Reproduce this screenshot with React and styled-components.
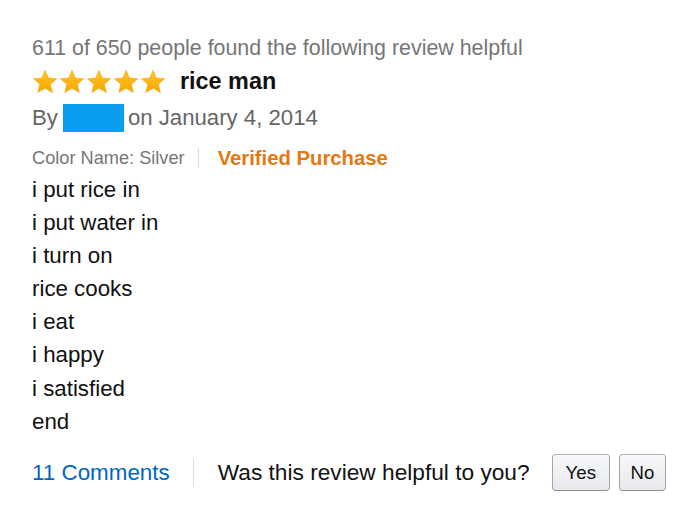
import React from "react";
import styled, { createGlobalStyle } from "styled-components";

const GlobalStyle = createGlobalStyle`
  html, body {
    margin: 0;
    padding: 0;
    background: #fff;
  }
  body {
    font-family: "Liberation Sans", Arial, sans-serif;
    color: #111;
  }
`;

const Review = styled.div`
  width: 700px;
  height: 522px;
  box-sizing: border-box;
  padding: 36px 0 0 32px;
`;

const Helpful = styled.div`
  font-size: 21.4px;
  line-height: 24px;
  color: #767676;
  white-space: nowrap;
`;

const TitleRow = styled.div`
  display: flex;
  align-items: center;
  gap: 14px;
  height: 29px;
  margin-top: 7px;
`;

const Stars = styled.div`
  display: flex;
  gap: 1px;
`;

const Title = styled.span`
  font-size: 23.4px;
  font-weight: bold;
  color: #111;
`;

const ByLine = styled.div`
  display: flex;
  align-items: center;
  height: 30px;
  font-size: 22.2px;
  color: #666;
  margin-top: 7px;
  white-space: nowrap;
`;

const Redacted = styled.span`
  display: inline-block;
  width: 61px;
  height: 28px;
  background: #0a9df0;
  margin: 0 4px 0 5px;
`;

const Meta = styled.div`
  display: flex;
  align-items: center;
  height: 30px;
  margin-top: 10px;
  white-space: nowrap;
`;

const Color = styled.span`
  font-size: 18.2px;
  color: #767676;
`;

const Divider = styled.span`
  display: inline-block;
  width: 1px;
  height: ${(p) => p.h || 20}px;
  background: #ddd;
  margin: 0 ${(p) => p.r || 19}px 0 ${(p) => p.l || 13}px;
`;

const Verified = styled.span`
  font-size: 20.3px;
  font-weight: bold;
  color: #e47911;
`;

const Body = styled.div`
  font-size: 22.3px;
  line-height: 33.1px;
  color: #111;
`;

const Footer = styled.div`
  display: flex;
  align-items: center;
  margin-top: 16px;
  height: 38px;
  white-space: nowrap;
`;

const Comments = styled.a`
  font-size: 22.4px;
  color: #0066c0;
  text-decoration: none;
`;

const Question = styled.span`
  font-size: 22.7px;
  color: #111;
  margin-right: 22px;
`;

const Button = styled.button`
  font-family: "Liberation Sans", Arial, sans-serif;
  font-size: 18.6px;
  color: #111;
  height: 37px;
  padding: 0 ${(p) => p.pad}px;
  margin-right: 9px;
  border: 1px solid #adb1b8;
  border-color: #adb1b8 #a2a6ac #8d9096;
  border-radius: 4px;
  background: linear-gradient(to bottom, #f7f8fa, #e7e9ec);
  box-shadow: 0 1px 0 rgba(255, 255, 255, 0.6) inset;
  cursor: pointer;
`;

const Star = () => (
  <svg width="26" height="26" viewBox="0 0 24 24">
    <defs>
      <linearGradient id="sg" x1="0" y1="0" x2="0" y2="1">
        <stop offset="0" stopColor="#ffc526" />
        <stop offset="1" stopColor="#f8a600" />
      </linearGradient>
    </defs>
    <path
      d="M12 1.2l3.2 7.1 7.6.7-5.8 5.1 1.8 7.6L12 17.7l-6.6 4 1.8-7.6L1.4 9l7.6-.7z"
      fill="url(#sg)"
      stroke="#eba400"
      strokeWidth="0.5"
    />
  </svg>
);

const lines = [
  "i put rice in",
  "i put water in",
  "i turn on",
  "rice cooks",
  "i eat",
  "i happy",
  "i satisfied",
  "end",
];

export default function App() {
  return (
    <>
      <GlobalStyle />
      <Review>
        <Helpful>611 of 650 people found the following review helpful</Helpful>
        <TitleRow>
          <Stars>
            {[0, 1, 2, 3, 4].map((i) => (
              <Star key={i} />
            ))}
          </Stars>
          <Title>rice man</Title>
        </TitleRow>
        <ByLine>
          By<Redacted />on January 4, 2014
        </ByLine>
        <Meta>
          <Color>Color Name: Silver</Color>
          <Divider />
          <Verified>Verified Purchase</Verified>
        </Meta>
        <Body>
          {lines.map((l) => (
            <div key={l}>{l}</div>
          ))}
        </Body>
        <Footer>
          <Comments href="#">11 Comments</Comments>
          <Divider h={28} l={23} r={24} />
          <Question>Was this review helpful to you?</Question>
          <Button pad={13}>Yes</Button>
          <Button pad={10.5}>No</Button>
        </Footer>
      </Review>
    </>
  );
}
